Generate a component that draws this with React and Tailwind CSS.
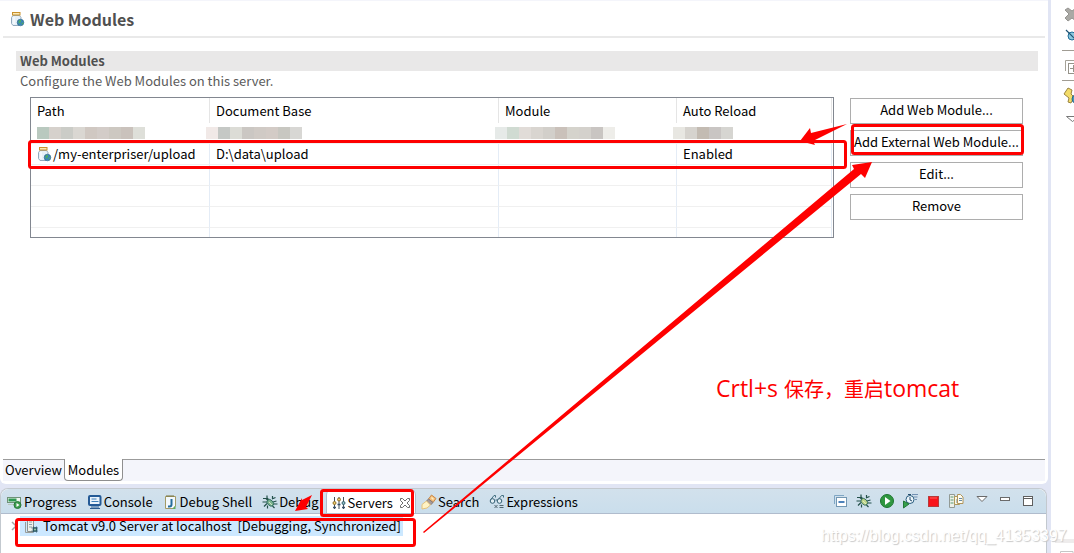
const MODULE_ROWS = [
    { path: '/my-enterpriser/upload', docBase: 'D:\\data\\upload', module: '', reload: 'Enabled' },
    { path: '', docBase: '', module: '', reload: '' },
    { path: '', docBase: '', module: '', reload: '' },
    { path: '', docBase: '', module: '', reload: '' },
]

const MODULE_ACTIONS = ['Add Web Module...', 'Add External Web Module...', 'Edit...', 'Remove']

const MOSAIC = {
    path: ['#b9c9bf', '#d6d1cc', '#cbccc7', '#dad7d2', '#d0c8c2', '#d3ccc8', '#cdc8c1', '#cac2bc', '#dedfd9'],
    docBase: ['#f1e9e7', '#c5c8c5', '#dcdcd6', '#cbc7c3', '#d0cac5', '#d3cbc6', '#c8c7c1', '#d8d7d4'],
    module: ['#e6eae8', '#d0dbd2', '#e1dcd8', '#d9d5d0', '#d2cfca', '#cac1ba', '#d5d3cc', '#d4d1cc', '#c9c5c2', '#eeede9'],
    reload: ['#e8e7e2', '#d6d3ce', '#c3bbb2', '#c9c5c3', '#d6d5d1'],
}

const Svg = ({ children, size = 16 }) => (
    <svg width={size} height={size} viewBox="0 0 16 16" fill="none" className="shrink-0" aria-hidden="true">
        {children}
    </svg>
)

const ModuleIcon = () => (
    <Svg>
        <path d="M3 4.5 1.500 6.500V12.500l1.500 2h6L11 12.500V6.500L9.500 4.500Z" fill="#e6f0f8" stroke="#93aabd" />
        <path d="M4 6v7" stroke="#fff" />
        <rect x="2.500" y="1.500" width="7.500" height="2.500" fill="#fbe9b5" stroke="#c9912c" />
        <circle cx="10.500" cy="11.500" r="3.300" fill="#3b86b8" stroke="#2b6585" strokeWidth=".6" />
        <path d="M8.500 10c2-2 3-1 2.500.5S8.500 12 9 14Zm3.500 1.500 1.500.5-1 1.500-1-.5Z" fill="#4fae5f" />
    </Svg>
)

const ProgressIcon = () => (
    <Svg>
        <rect x=".5" y="3.500" width="13" height="5" fill="#eef5ee" stroke="#6f9278" />
        <rect x="1.500" y="4.500" width="8" height="3" fill="#2f9a52" />
        <path d="M1 10.500h7" stroke="#b7c8bb" />
        <circle cx="10.500" cy="11" r="3.500" fill="#3c9d4c" stroke="#2a7a3b" />
        <path d="M9.500 9v4l3-2Z" fill="#fff" />
    </Svg>
)

const ConsoleIcon = () => (
    <Svg>
        <rect x="2" y="2" width="11.500" height="9" rx="1" fill="#eaf3fb" stroke="#245a96" strokeWidth="2" />
        <path d="M4.500 5h5M4.500 7.500h7" stroke="#3f7fb8" />
        <path d="M4 13h8M3 14.500h10" stroke="#2d5c90" />
    </Svg>
)

const ShellIcon = () => (
    <Svg>
        <path d="M2.500 2.500h10V12l-2.500 2.500H2.500Z" fill="#f2f8fc" stroke="#a39a65" />
        <path d="M4 1v2M6 1v2M8 1v2M10 1v2" stroke="#77723f" />
        <path d="M8.500 5v5.500q0 2-2 2H5" stroke="#266d9b" strokeWidth="2" />
        <path d="M12.500 11.500 9.500 15h3Z" fill="#5cad60" />
    </Svg>
)

const BugIcon = ({ body = '#7cb391' }) => (
    <Svg>
        <path
            d="M5 1.500v2.500l2 2M10.500 2v2.500M1 4.500h3l2 2M.5 8h4.500M2 12.500l3-3M5.500 14.500v-3M10 5l3.500-1.500M11 8l3.500-1M11 10h4.500M10.500 12l2 2"
            stroke="#23504a"
            strokeWidth="1.200"
        />
        <ellipse cx="8.300" cy="8.800" rx="2.700" ry="3.800" fill={body} stroke="#2d6a5c" strokeWidth=".9" transform="rotate(-45 8.300 8.800)" />
        <path d="m7 8 3 3" stroke="#e4f2cf" strokeWidth=".8" />
    </Svg>
)

const ServersIcon = () => (
    <Svg>
        <path d="M3.500 2v12M8 2v12M12.500 2v12" stroke="#44525c" />
        <circle cx="3.500" cy="8" r="1.500" fill="#f0cd6a" stroke="#91702a" />
        <circle cx="8" cy="4.500" r="1.500" fill="#f0cd6a" stroke="#91702a" />
        <circle cx="12.500" cy="8" r="1.500" fill="#8fbcc6" stroke="#34626d" />
        <path d="M2 12.500h3M6.500 9.500h3M11 12.500h3" stroke="#39506a" strokeWidth="1.500" />
    </Svg>
)

const CloseIcon = () => (
    <svg width="12" height="12" viewBox="0 0 12 12" fill="none" aria-hidden="true">
        <path
            d="M1.500 1.500h2L6 4l2.500-2.500h2v2L8 6l2.500 2.500v2h-2L6 8l-2.500 2.500h-2v-2L4 6 1.500 3.500Z"
            fill="#fff"
            stroke="#6c6c6c"
        />
    </svg>
)

const SearchIcon = () => (
    <Svg>
        <path d="m10.500 1 4.500 3.500-3 4L7.500 5Z" fill="#f2bd7c" stroke="#c98a4a" />
        <path d="m7.500 5 4.500 3.500-2.500 2.500-4-4Z" fill="#a69c9c" stroke="#857a78" />
        <path d="m5.500 7 4 4L6 14l-5 1V10.500Z" fill="#fff3c4" stroke="#e3c27c" />
        <path d="M10.500 3.500 12.500 5.500" stroke="#fff1bf" strokeWidth="1.500" />
    </Svg>
)

const ExpressionsIcon = () => (
    <Svg>
        <path d="M1.500 6 5 1.500h1.500v2M9 6l3.500-4.500h2v2M6.500 6h2" stroke="#426f81" />
        <circle cx="3.500" cy="7" r="2.300" fill="#e3eff4" stroke="#335f74" />
        <circle cx="10.500" cy="7" r="2.300" fill="#e3eff4" stroke="#335f74" />
        <path d="m5.500 11 3 3m0-3-3 3M10.500 11.500h4M10.500 13.500h4" stroke="#51666f" />
    </Svg>
)

const ServerNodeIcon = () => (
    <Svg>
        <path d="M3.500 1.500h6v12h-6Z" fill="#eef0ea" stroke="#8c9290" />
        <path d="M1.500 4v10.500H9" stroke="#9a9d98" />
        <path d="M5 4h3M5 6.500h3M5 9h3" stroke="#8ca2ad" />
        <circle cx="11" cy="11.500" r="1.800" fill="#92c9a8" stroke="#274d5a" />
        <path d="M7.500 10h6.500M7.500 13h6.500M9.500 8.500v6M12.500 8.500v6" stroke="#2c5664" strokeWidth=".8" />
    </Svg>
)

const CollapseIcon = () => (
    <Svg>
        <path d="M1.500 11V2.500H11" stroke="#7fa6c4" />
        <rect x="3.500" y="4.500" width="10" height="9" fill="#fff" stroke="#7297b3" />
        <path d="M5.500 9h6" stroke="#135aa5" strokeWidth="1.500" />
    </Svg>
)

const RunIcon = () => (
    <Svg>
        <circle cx="8" cy="8" r="6.500" fill="#2f9740" stroke="#1e7630" />
        <path d="M6 4v8l5.500-4Z" fill="#fff" />
    </Svg>
)

const ProfileIcon = () => (
    <Svg>
        <path d="M10 1.500h6M12 4h3.500M13 6.500h2" stroke="#7190b2" />
        <circle cx="8" cy="6.500" r="4" fill="#edf6fb" stroke="#275b7e" />
        <path d="M8 4v3l2 1M6 1.500h3" stroke="#254d6d" />
        <path d="M1.500 8v7l5.500-4Z" fill="#36a04b" stroke="#23773a" />
    </Svg>
)

const StopIcon = () => (
    <Svg>
        <rect x="3.500" y="3.500" width="10" height="10" fill="#f9131a" stroke="#b73a3a" />
        <path d="M5 5h7" stroke="#ff625c" />
    </Svg>
)

const PublishIcon = () => (
    <Svg>
        <path d="M1.500 1.500h5v13h-5Z" fill="#edf0e9" stroke="#929a95" />
        <path d="M2.500 4h3M2.500 7h3M2.500 10h3" stroke="#5c9a70" />
        <path d="M6.500 3.500h5v8h-5Z" fill="#fff9e2" stroke="#ad995e" />
        <path d="M9.500 1.500h3l2.500 2.500v6.500H9.500Z" fill="#fffdf1" stroke="#b0945a" />
        <path d="M11 5.500h3M11 7.500h3M8 7h1M8 9h1" stroke="#6689a5" />
    </Svg>
)

const MenuIcon = () => (
    <Svg>
        <path d="M3 3.500h10L8 8.500Z" fill="#fff" stroke="#6a6a6a" />
    </Svg>
)

const MinimizeIcon = () => (
    <Svg>
        <rect x="3.500" y="4.500" width="9" height="3" fill="#fff" stroke="#6a6a6a" />
    </Svg>
)

const MaximizeIcon = () => (
    <Svg>
        <rect x="3.500" y="3.500" width="9" height="9" fill="#fff" stroke="#5f5f5f" />
        <path d="M3 5.500h10" stroke="#5f5f5f" />
    </Svg>
)

const VIEW_TABS = [
    { label: 'Progress', icon: <ProgressIcon /> },
    { label: 'Console', icon: <ConsoleIcon /> },
    { label: 'Debug Shell', icon: <ShellIcon /> },
    { label: 'Debug', icon: <BugIcon /> },
    { label: 'Servers', icon: <ServersIcon />, active: true },
    { label: 'Search', icon: <SearchIcon /> },
    { label: 'Expressions', icon: <ExpressionsIcon /> },
]

const SERVER_TOOLS = [
    { label: 'Collapse All', icon: <CollapseIcon /> },
    { label: 'Debug server', icon: <BugIcon body="#bfd58a" /> },
    { label: 'Start server', icon: <RunIcon /> },
    { label: 'Profile server', icon: <ProfileIcon /> },
    { label: 'Stop server', icon: <StopIcon /> },
    { label: 'Publish', icon: <PublishIcon /> },
]

const VIEW_TOOLS = [
    { label: 'View Menu', icon: <MenuIcon /> },
    { label: 'Minimize', icon: <MinimizeIcon /> },
    { label: 'Maximize', icon: <MaximizeIcon /> },
]

const Toolbar = ({ tools }) => (
    <div className="flex items-center gap-[7px]">
        {tools.map((tool) => (
            <button key={tool.label} type="button" aria-label={tool.label}>
                {tool.icon}
            </button>
        ))}
    </div>
)

const Mosaic = ({ colors, className = '' }) => (
    <div className={`flex ${className}`}>
        {colors.map((color, i) => (
            <span key={i} className="h-3 w-3 shrink-0" style={{ backgroundColor: color }} />
        ))}
    </div>
)

const ModulesTable = () => (
    <div className="flex-1 border border-[#828790] pr-px">
        <table className="w-full table-fixed border-separate border-spacing-0 text-left">
            <colgroup>
                <col className="w-[179px]" />
                <col className="w-[289px]" />
                <col className="w-[178px]" />
                <col />
            </colgroup>
            <thead>
                <tr className="h-[25px]">
                    {['Path', 'Document Base', 'Module', 'Auto Reload'].map((name) => (
                        <th key={name} className="border-r border-[#e5e5e5] px-[6px] py-0 font-normal">
                            {name}
                        </th>
                    ))}
                </tr>
            </thead>
            <tbody>
                <tr className="h-[21px] *:border-b *:border-[#f0f0f0] *:px-[6px] *:py-0">
                    <td><Mosaic colors={MOSAIC.path} /></td>
                    <td><Mosaic colors={MOSAIC.docBase} className="-ml-[10px]" /></td>
                    <td><Mosaic colors={MOSAIC.module} className="-ml-[10px]" /></td>
                    <td><Mosaic colors={MOSAIC.reload} className="-ml-[10px]" /></td>
                </tr>
                {MODULE_ROWS.map((row, i) => (
                    <tr
                        key={i}
                        className="h-[21px] *:border-r *:border-b *:border-r-[#e4ecf6] *:border-b-[#f0f0f0] *:px-[6px] *:py-0"
                    >
                        <td>
                            {row.path && (
                                <div className="flex items-center">
                                    <ModuleIcon />
                                    {row.path}
                                </div>
                            )}
                        </td>
                        <td>{row.docBase}</td>
                        <td>{row.module}</td>
                        <td>{row.reload}</td>
                    </tr>
                ))}
                <tr className="h-[9px] *:border-r *:border-[#e4ecf6] *:p-0">
                    <td />
                    <td />
                    <td />
                    <td />
                </tr>
            </tbody>
        </table>
    </div>
)

const Editor = () => (
    <section className="flex flex-1 flex-col rounded-b-md border-t border-[#f4f5fb] bg-white pr-[3px] pb-[3px] pl-[3px]">
        <header className="flex h-[37px] items-center gap-1 border-b-2 border-[#e9e9e9] pl-[7px]">
            <ModuleIcon />
            <h1 className="text-base leading-5 font-bold text-[#505050]">Web Modules</h1>
        </header>

        <div className="flex-1 pt-[13px] pr-[7px] pl-[13px]">
            <h2 className="h-5 bg-[#e9e8e8] pl-1 leading-5 font-bold text-[#505050]">Web Modules</h2>
            <p className="h-[26px] pl-1 leading-5 text-[#5b5b5b]">Configure the Web Modules on this server.</p>
            <div className="flex items-start gap-4 pr-[15px] pl-[14px]">
                <ModulesTable />
                <div className="flex w-[173px] shrink-0 flex-col gap-[6px] pt-px">
                    {MODULE_ACTIONS.map((action) => (
                        <button
                            key={action}
                            type="button"
                            className="h-[26px] border border-[#adadad] bg-white pb-[2px] whitespace-nowrap"
                        >
                            {action}
                        </button>
                    ))}
                </div>
            </div>
        </div>

        <nav className="flex h-[22px] border-t border-[#9b9b9b] bg-[#f4f5fb]">
            <button type="button" className="w-[61px] pb-[2px] text-center">Overview</button>
            <button
                type="button"
                className="-mt-px h-[22px] w-[59px] rounded-b border border-t-0 border-[#8f8f8f] bg-white text-center"
            >
                Modules
            </button>
        </nav>
    </section>
)

const ServersView = () => (
    <section className="mr-px h-[65px] rounded-t-lg border border-b-0 border-[#c3c9cf] bg-white">
        <div className="flex h-[25px] items-stretch overflow-hidden rounded-t-lg border-b border-[#b0bccd] bg-linear-to-b from-[#d2e1ec] to-[#cadeec]">
            <div className="flex flex-1 pl-px">
                {VIEW_TABS.map((tab) => (
                    <button
                        key={tab.label}
                        type="button"
                        className={
                            tab.active
                                ? 'ml-[2px] flex h-[25px] items-center gap-px rounded-t-md border-x border-[#b0bccd] bg-white px-1 pt-[2px] whitespace-nowrap'
                                : 'flex items-center gap-px px-[5px] pt-[2px] whitespace-nowrap'
                        }
                    >
                        {tab.icon}
                        {tab.label}
                        {tab.active && <span className="pl-[5px]"><CloseIcon /></span>}
                    </button>
                ))}
            </div>
            <div className="flex items-center gap-[10px] pr-[10px]">
                <Toolbar tools={SERVER_TOOLS} />
                <Toolbar tools={VIEW_TOOLS} />
            </div>
        </div>
        <div className="flex items-center pt-[2px] pl-[9px]">
            <svg width="10" height="10" viewBox="0 0 10 10" fill="none" aria-hidden="true">
                <path d="m2 1 4 4-4 4" stroke="#a5a5a5" strokeWidth="1.500" />
            </svg>
            <div className="flex h-5 items-center bg-[#cce8ff] pr-[2px] pl-1 whitespace-pre">
                <ServerNodeIcon />
                <span className="pl-[3px]">{'Tomcat v9.0 Server at localhost  [Debugging, Synchronized]'}</span>
            </div>
        </div>
    </section>
)

const SideBar = () => (
    <aside className="flex w-[23px] shrink-0 flex-col justify-between overflow-hidden bg-white pl-1">
        <svg width="24" height="130" viewBox="0 0 24 130" fill="none" aria-hidden="true" className="shrink-0">
            <path d="m10 10 3-2 4 3 4-3 3 2-4 4 4 4-3 3-4-3-4 3-3-3 4-4Z" fill="#aaa9a5" stroke="#969591" />
            <circle cx="17" cy="36" r="4" fill="#8bc7de" stroke="#216e99" />
            <path d="m11 30 12 12" stroke="#1e5272" strokeWidth="1.200" />
            <path d="M7 50.500h17M7 80.500h17" stroke="#a09c93" />
            <path d="M10.500 71V60.500H24" stroke="#a5a298" />
            <rect x="13.500" y="63.500" width="12" height="10" fill="#fff" stroke="#96938a" />
            <path d="M15 68.500h8M18.500 65v7" stroke="#96938a" />
            <path d="m13 88 4 2-1 4 3 3-3 6-3-1 1-4-5-4Z" fill="#f3dc68" stroke="#9b8440" />
            <circle cx="21" cy="99" r="4" fill="#4398bd" stroke="#29678a" />
            <path d="M11.500 116.500H24L17.500 121.500Z" fill="#fff" stroke="#777" />
        </svg>
        <svg width="24" height="14" viewBox="0 0 24 14" fill="none" aria-hidden="true" className="shrink-0">
            <path d="M0 0h24v4H0Z" fill="#eeecec" />
            <path d="M5.500 14v-1.500H18V14" stroke="#c6c6c6" />
        </svg>
    </aside>
)

const Annotations = () => (
    <div className="pointer-events-none absolute inset-0 overflow-hidden">
        <svg width="1074" height="553" viewBox="0 0 1074 553" fill="none" aria-hidden="true">
            <g stroke="#fe0000" strokeWidth="3">
                <rect x="29.500" y="141.500" width="816" height="26" rx="2" />
                <rect x="852.500" y="125.500" width="170" height="28" rx="2" />
                <rect x="321.500" y="490.500" width="91" height="25" rx="2" />
                <rect x="16.500" y="519.500" width="398" height="26" rx="2" />
            </g>
            <g fill="#fe0000">
                <path d="M847 124 811 133l-1-5-10 13 15 4-2-4Z" />
                <path d="M423 532 854 169l-2-4 20-3-7 16-4-4L424 533Z" />
                <path d="m312 495-10 5v-2l-7 13 13-2-2-2Z" />
            </g>
        </svg>
        <p className="absolute top-[374px] left-[716px] font-['Open_Sans','Noto_Sans_CJK_SC',sans-serif] text-xl leading-7 whitespace-nowrap text-[#fe0000]">
            <span className="text-[23px]">Crtl+s </span>
            保存，重启
            <span className="text-[23px]">tomcat</span>
        </p>
        <p className="absolute top-[524px] left-[821px] font-['Liberation_Sans'] text-base leading-6 whitespace-nowrap text-white [text-shadow:1px_1px_1px_#c8c8c8]">
            https://blog.csdn.net/qq_41353397
        </p>
    </div>
)

export default function App() {
    return (
        <div className="relative flex min-h-screen bg-[#e1e5f4] font-['Noto_Sans_CJK_SC',sans-serif] text-[13px] leading-4 text-black">
            <main className="flex min-w-0 flex-1 flex-col gap-1">
                <Editor />
                <ServersView />
            </main>
            <div className="w-[3px] shrink-0" />
            <SideBar />
            <Annotations />
        </div>
    )
}
